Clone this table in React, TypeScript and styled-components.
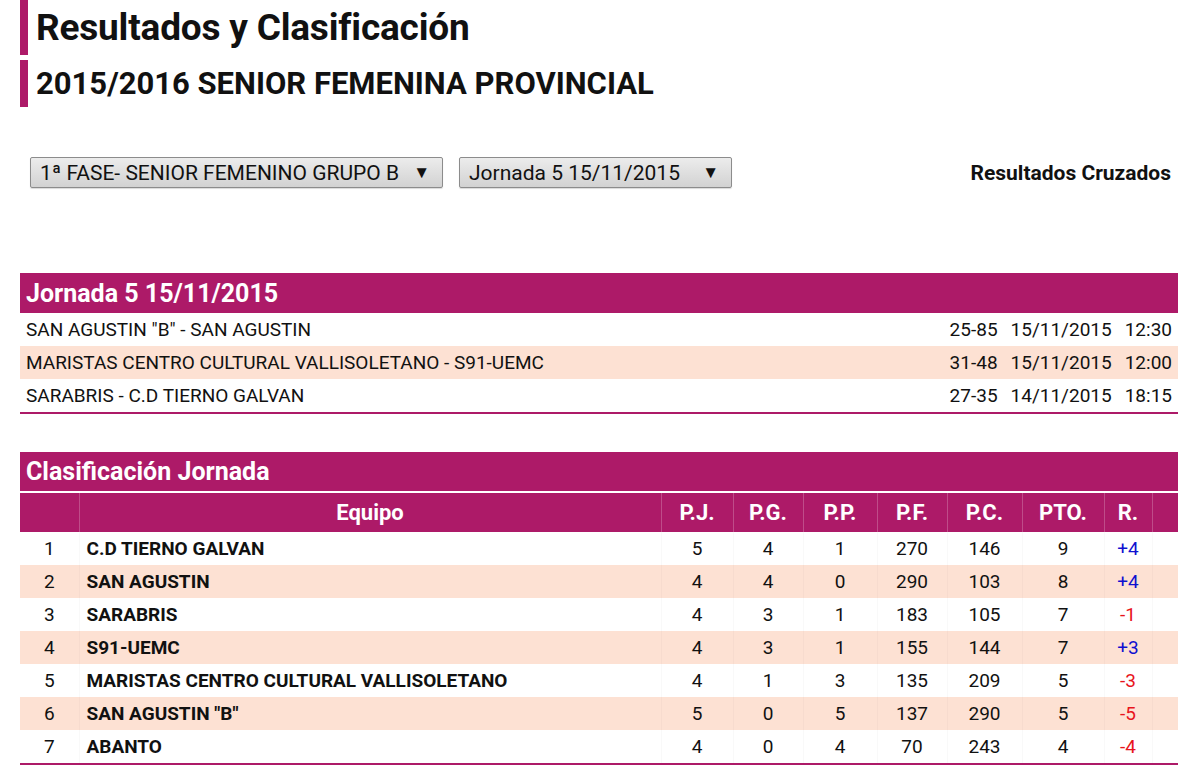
import React from "react";
import styled, { createGlobalStyle } from "styled-components";

const MAGENTA = "#ad1a68";
const PEACH = "#fde1d3";

const GlobalStyle = createGlobalStyle`
  html, body { margin: 0; padding: 0; background: #fff; }
  body { font-family: Roboto, "Liberation Sans", Arial, sans-serif; color: #111; }
  * { box-sizing: border-box; }
`;

const Page = styled.div`
  width: 1200px;
  padding: 0 22px 0 20px;
`;

const TitleBlock = styled.div<{ $h: number; $mt?: number }>`
  display: flex;
  align-items: center;
  height: ${(p) => p.$h}px;
  margin-top: ${(p) => p.$mt ?? 0}px;
  border-left: 8px solid ${MAGENTA};
  padding-left: 8px;
`;

const H1 = styled.h1`
  margin: 0;
  font-size: 37px;
  font-weight: 700;
  letter-spacing: -0.2px;
  color: #111;
  line-height: 1;
`;

const H2 = styled.h2`
  margin: 0;
  font-size: 31px;
  font-weight: 700;
  color: #111;
  line-height: 1;
`;

const Controls = styled.div`
  display: flex;
  align-items: center;
  margin-top: 50px;
  padding: 0 7px 0 10px;
  gap: 16px;
`;

const Select = styled.div<{ $w: number }>`
  width: ${(p) => p.$w}px;
  height: 31px;
  display: flex;
  align-items: center;
  justify-content: space-between;
  padding: 0 12px 0 9px;
  border: 1px solid #8c8c8c;
  border-radius: 2px;
  background: linear-gradient(#ececec, #d2d2d2);
  box-shadow: 0 1px 1px rgba(0, 0, 0, 0.15);
  font-size: 21px;
  color: #111;
`;

const Arrow = styled.span`
  font-size: 17px;
`;

const Cruzados = styled.div`
  margin-left: auto;
  font-size: 21px;
  font-weight: 700;
  color: #111;
`;

const Panel = styled.section<{ $mt: number }>`
  margin-top: ${(p) => p.$mt}px;
  border-bottom: 2px solid ${MAGENTA};
`;

const PanelHead = styled.div<{ $h: number }>`
  height: ${(p) => p.$h}px;
  background: ${MAGENTA};
  color: #fff;
  font-size: 25px;
  font-weight: 700;
  display: flex;
  align-items: center;
  padding-left: 6px;
`;

const MatchRow = styled.div<{ $alt: boolean }>`
  display: grid;
  grid-template-columns: 1fr auto auto auto;
  column-gap: 13px;
  align-items: center;
  height: 33px;
  padding: 0 6px 0 6px;
  background: ${(p) => (p.$alt ? PEACH : "#fff")};
  font-size: 19px;
`;

const Table = styled.table`
  width: 100%;
  border-collapse: collapse;
  table-layout: fixed;
  margin-top: 2px;
`;

const Th = styled.th`
  background: ${MAGENTA};
  color: #fff;
  height: 39px;
  font-size: 22px;
  font-weight: 700;
  text-align: center;
  padding: 0;
  border-left: 1px solid rgba(255, 255, 255, 0.22);
  &:first-child { border-left: none; }
`;

const Tr = styled.tr<{ $alt: boolean }>`
  background: ${(p) => (p.$alt ? PEACH : "#fff")};
`;

const Td = styled.td<{ $bold?: boolean; $left?: boolean; $color?: string }>`
  height: 33px;
  padding: ${(p) => (p.$left ? "0 0 0 7px" : "0")};
  font-size: 19px;
  font-weight: ${(p) => (p.$bold ? 700 : 400)};
  text-align: ${(p) => (p.$left ? "left" : "center")};
  color: ${(p) => p.$color ?? "#111"};
  border-left: 1px solid rgba(0, 0, 0, 0.025);
  &:first-child { border-left: none; }
  white-space: nowrap;
`;

const matches = [
  ["SAN AGUSTIN \"B\" - SAN AGUSTIN", "25-85", "15/11/2015", "12:30"],
  ["MARISTAS CENTRO CULTURAL VALLISOLETANO - S91-UEMC", "31-48", "15/11/2015", "12:00"],
  ["SARABRIS - C.D TIERNO GALVAN", "27-35", "14/11/2015", "18:15"],
];

const standings: [string, number, number, number, number, number, number, string][] = [
  ["C.D TIERNO GALVAN", 5, 4, 1, 270, 146, 9, "+4"],
  ["SAN AGUSTIN", 4, 4, 0, 290, 103, 8, "+4"],
  ["SARABRIS", 4, 3, 1, 183, 105, 7, "-1"],
  ["S91-UEMC", 4, 3, 1, 155, 144, 7, "+3"],
  ["MARISTAS CENTRO CULTURAL VALLISOLETANO", 4, 1, 3, 135, 209, 5, "-3"],
  ["SAN AGUSTIN \"B\"", 5, 0, 5, 137, 290, 5, "-5"],
  ["ABANTO", 4, 0, 4, 70, 243, 4, "-4"],
];

const widths = [59, 582, 72, 70, 74, 70, 75, 82, 48, 26];
const heads = ["", "Equipo", "P.J.", "P.G.", "P.P.", "P.F.", "P.C.", "PTO.", "R.", ""];

export default function App() {
  return (
    <Page>
      <GlobalStyle />
      <TitleBlock $h={55}>
        <H1>Resultados y Clasificación</H1>
      </TitleBlock>
      <TitleBlock $h={47} $mt={5}>
        <H2>2015/2016 SENIOR FEMENINA PROVINCIAL</H2>
      </TitleBlock>

      <Controls>
        <Select $w={413}>
          <span>1ª FASE- SENIOR FEMENINO GRUPO B</span>
          <Arrow>▼</Arrow>
        </Select>
        <Select $w={273}>
          <span>Jornada 5 15/11/2015</span>
          <Arrow>▼</Arrow>
        </Select>
        <Cruzados>Resultados Cruzados</Cruzados>
      </Controls>

      <Panel $mt={85}>
        <PanelHead $h={40}>Jornada 5 15/11/2015</PanelHead>
        {matches.map((m, i) => (
          <MatchRow key={i} $alt={i % 2 === 1}>
            <span>{m[0]}</span>
            <span>{m[1]}</span>
            <span>{m[2]}</span>
            <span>{m[3]}</span>
          </MatchRow>
        ))}
      </Panel>

      <Panel $mt={38}>
        <PanelHead $h={39}>Clasificación Jornada</PanelHead>
        <Table>
          <colgroup>
            {widths.map((w, i) => (
              <col key={i} style={{ width: w }} />
            ))}
          </colgroup>
          <thead>
            <tr>
              {heads.map((h, i) => (
                <Th key={i}>{h}</Th>
              ))}
            </tr>
          </thead>
          <tbody>
            {standings.map((r, i) => (
              <Tr key={i} $alt={i % 2 === 1}>
                <Td>{i + 1}</Td>
                <Td $bold $left>
                  {r[0]}
                </Td>
                <Td>{r[1]}</Td>
                <Td>{r[2]}</Td>
                <Td>{r[3]}</Td>
                <Td>{r[4]}</Td>
                <Td>{r[5]}</Td>
                <Td>{r[6]}</Td>
                <Td $color={r[7].startsWith("+") ? "#1010d0" : "#e8141c"}>{r[7]}</Td>
                <Td />
              </Tr>
            ))}
          </tbody>
        </Table>
      </Panel>
    </Page>
  );
}
